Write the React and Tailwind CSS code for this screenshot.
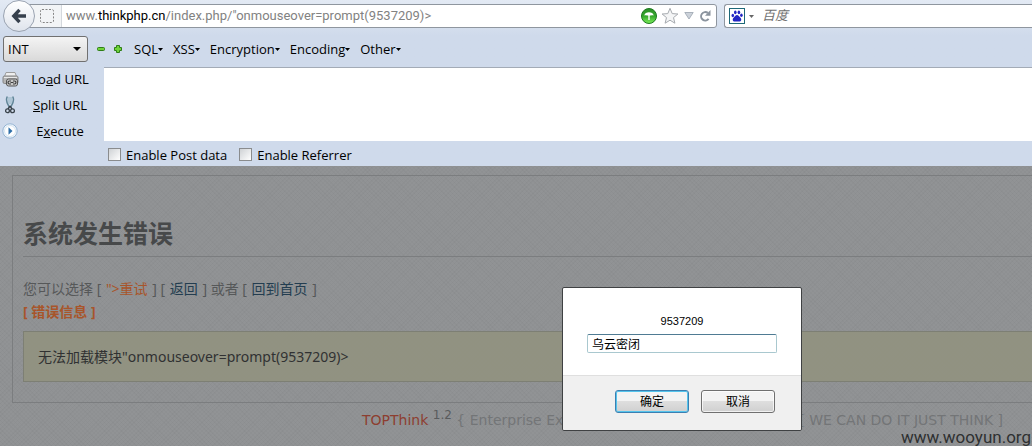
const ui = "font-['Open_Sans','Noto_Sans_CJK_SC',sans-serif]";

function BackIcon() {
  return (
    <svg width="16" height="16" viewBox="0 0 16 16" fill="none" stroke="#36404d" strokeWidth="3.4" aria-hidden="true">
      <path d="M8.5 1.8 2.8 8l5.7 6.2M3.2 8H15" />
    </svg>
  );
}

function ShieldIcon() {
  return (
    <svg width="18" height="18" viewBox="0 0 18 18" aria-hidden="true">
      <defs>
        <linearGradient id="globe" x1="0" y1="0" x2="0" y2="1">
          <stop offset="0" stopColor="#2b8f27" />
          <stop offset=".5" stopColor="#35a72d" />
          <stop offset="1" stopColor="#7df05a" />
        </linearGradient>
      </defs>
      <circle cx="9" cy="9" r="7.5" fill="url(#globe)" stroke="#1c7a20" />
      <path d="M4.300 8.500C5 4.200 13 4.200 13.700 8.500c-1.600-.7-3 0-4.700 0s-3.100-.7-4.700 0Z" fill="#fff" />
      <path d="M9 8v5" stroke="#fff" strokeWidth="1.4" />
    </svg>
  );
}

function StarIcon() {
  return (
    <svg width="18" height="18" viewBox="0 0 18 18" aria-hidden="true">
      <path d="m9 1.3 2.2 5.3 5.7.4-4.4 3.6 1.4 5.6L9 13.200l-4.900 3 1.400-5.600L1.100 7l5.700-.4Z" fill="#f4f5f6" stroke="#a7abb0" strokeLinejoin="round" />
    </svg>
  );
}

function ReloadIcon() {
  return (
    <svg width="12" height="12" viewBox="0 0 12 12" aria-hidden="true">
      <path d="M8.800 2.900A4.200 4.200 0 1 0 9.600 8.900" fill="none" stroke="#8b949e" strokeWidth="2" />
      <path d="M11.500 0v5.800H6Z" fill="#8b949e" />
    </svg>
  );
}

function PawIcon() {
  return (
    <svg width="16" height="16" viewBox="0 0 16 16" aria-hidden="true">
      <rect x=".5" y=".5" width="15" height="15" fill="#fff" stroke="#1d6878" />
      <g fill="#2326c4">
        <ellipse cx="3.800" cy="7.500" rx="1.300" ry="1.800" />
        <ellipse cx="6.300" cy="4.300" rx="1.300" ry="1.900" />
        <ellipse cx="9.900" cy="4.300" rx="1.300" ry="1.900" />
        <ellipse cx="12.400" cy="7.300" rx="1.300" ry="1.800" />
        <path d="M8 7c1.500 0 2.200 1.600 3.400 2.700 1.600 1.500.9 3.900-1.100 3.900H5.700c-2 0-2.700-2.400-1.100-3.900C5.800 8.600 6.500 7 8 7Z" />
      </g>
    </svg>
  );
}

function Caret({ className }) {
  return (
    <svg width="5" height="3" viewBox="0 0 5 3" className={className} aria-hidden="true">
      <path d="M0 0h5L2.500 3Z" fill="currentColor" />
    </svg>
  );
}

function LoadIcon() {
  return (
    <svg width="17" height="16" viewBox="0 0 17 16" fill="none" aria-hidden="true">
      <path d="M4 1.500h9l1.500 4h-12Z" fill="#eeeeee" stroke="#9c9c9c" />
      <rect x="1" y="5" width="15" height="7.500" rx="1.500" fill="#b5b5b5" stroke="#858585" />
      <path d="M2 6.500h13" stroke="#e8e8e8" />
      <rect x="4.500" y="8" width="11" height="7" rx="2" fill="#c9c9c9" stroke="#555" />
      <path d="M9 10H7.500a1.500 1.500 0 0 0 0 3H9M11 10h1.500a1.500 1.500 0 0 1 0 3H11M8.500 11.500h3" stroke="#3c3c3c" strokeWidth="1.200" />
    </svg>
  );
}

function SplitIcon() {
  return (
    <svg width="10" height="18" viewBox="0 0 10 18" fill="none" aria-hidden="true">
      <path d="M2.300.5C1 3 1.500 7 4.300 11M7.700.5C9 3 8.500 7 5.700 11" stroke="#5f8496" strokeWidth="1.500" />
      <path d="M4 1v7M6 1v7" stroke="#8fb3c1" />
      <path d="m5 10-2 3m2-3 2 3" stroke="#39424a" strokeWidth="1.400" />
      <circle cx="2.500" cy="14.800" r="1.900" stroke="#39424a" strokeWidth="1.300" />
      <circle cx="7.500" cy="14.800" r="1.900" stroke="#39424a" strokeWidth="1.300" />
    </svg>
  );
}

function ExecuteIcon() {
  return (
    <svg width="16" height="16" viewBox="0 0 16 16" aria-hidden="true">
      <circle cx="8" cy="8" r="7.200" fill="#f4f9fd" stroke="#93b3d3" />
      <circle cx="8" cy="8" r="5.500" fill="#fff" stroke="#d5e4f1" />
      <path d="m6.500 4.300 4 3.700-4 3.700Z" fill="#2e6fa8" />
    </svg>
  );
}

function AddressRow() {
  return (
    <div className="flex h-[35px] items-start">
      <button aria-label="Back" className="z-10 ml-[3px] flex size-8 shrink-0 items-center justify-center rounded-full border border-[#9aa3b1] bg-linear-to-b from-white to-[#dfe4ec]">
        <BackIcon />
      </button>
      <div className="mt-1 -ml-2 flex h-6 min-w-0 flex-1 items-center rounded-r-[3px] border border-[#8f969f] bg-white">
        <span className="flex h-full w-[34px] shrink-0 items-center justify-end border-r border-[#d4d8dd] bg-[#f2f4f6] pr-[7px]">
          <svg width="14" height="14" viewBox="0 0 14 14" className="shrink-0" aria-hidden="true">
            <rect x=".5" y=".5" width="13" height="13" rx="1.500" fill="none" stroke="#858585" strokeDasharray="2 1.500" />
          </svg>
        </span>
        <p className="min-w-0 flex-1 truncate pl-1 font-['Roboto',sans-serif] text-[13px] leading-5 text-[#828282]">
          www.<span className="text-black">thinkphp.cn</span>/index.php/"onmouseover=prompt(9537209)&gt;
        </p>
        <div className="flex items-center gap-[3px] pr-[5px]">
          <ShieldIcon />
          <button aria-label="Bookmark"><StarIcon /></button>
          <button aria-label="History" className="flex w-[14px] justify-center">
            <svg width="10" height="8" viewBox="0 0 10 8" aria-hidden="true"><path d="M.8.5h8.400L5 7Z" fill="#ccd2da" stroke="#a9b1bb" /></svg>
          </button>
          <button aria-label="Reload"><ReloadIcon /></button>
        </div>
      </div>
      <div className="mt-1 ml-[7px] flex h-6 w-[308px] shrink-0 items-center rounded-l-[3px] border border-r-0 border-[#8f969f] bg-white pl-1">
        <PawIcon />
        <Caret className="mx-1 text-[#666]" />
        <input aria-label="Search" placeholder="百度" className="ml-1 min-w-0 flex-1 text-[13px] italic outline-none placeholder:text-[#707070]" />
      </div>
    </div>
  );
}

function HackBar() {
  const menus = ["SQL", "XSS", "Encryption", "Encoding", "Other"];
  const link = "flex h-[26px] items-center";
  return (
    <div className="text-[13px] leading-5 text-black">
      <div className="flex h-8 items-start pl-[3px]">
        <div className="relative mt-px">
          <select aria-label="Type" className="h-[26px] w-[85px] appearance-none rounded-[3px] border border-[#707070] bg-linear-to-b from-[#f4f4f4] to-[#d9d9d9] pl-1 outline-none">
            <option>INT</option>
          </select>
          <svg width="8" height="4" viewBox="0 0 8 4" className="pointer-events-none absolute top-[11px] right-[7px]" aria-hidden="true"><path d="M0 0h8L4 4Z" /></svg>
        </div>
        <div className="flex h-7 items-center">
          <button aria-label="Decrease" className="ml-[9px]">
            <svg width="8" height="4" viewBox="0 0 8 4" className="block" aria-hidden="true"><rect x=".5" y=".5" width="7" height="3" rx="1" fill="#6fd43a" stroke="#2e7d17" /></svg>
          </button>
          <button aria-label="Increase" className="mr-3 ml-[9px]">
            <svg width="8" height="8" viewBox="0 0 8 8" className="block" aria-hidden="true"><path d="M2.500.5h3v2h2v3h-2v2h-3v-2h-2v-3h2Z" fill="#6fd43a" stroke="#2e7d17" /></svg>
          </button>
          <div className="flex gap-[10px]">
            {menus.map((m) => (
              <button key={m} className="flex items-center">
                {m}
                <Caret />
              </button>
            ))}
          </div>
        </div>
      </div>
      <div className="flex">
        <div className="-mt-px grid w-[104px] shrink-0 grid-cols-[20px_1fr] content-start items-center pr-1">
          <span className="flex justify-center"><LoadIcon /></span>
          <button className={`${link} justify-center`}><span>Lo<u>a</u>d URL</span></button>
          <span className="flex justify-center"><SplitIcon /></span>
          <button className={`${link} justify-center`}><span><u>S</u>plit URL</span></button>
          <span className="flex justify-center"><ExecuteIcon /></span>
          <button className={`${link} justify-center`}><span>E<u>x</u>ecute</span></button>
        </div>
        <div className="flex min-w-0 flex-1 flex-col">
          <textarea aria-label="URL" className="block h-[74px] w-full resize-none border-t border-[#a3abb6] bg-white outline-none" />
          <div className="flex h-[25px] items-center gap-3 pt-0.5 pl-1">
            {["Enable Post data", "Enable Referrer"].map((t) => (
              <label key={t} className="flex items-center gap-[5px]">
                <input type="checkbox" className="size-[13px] appearance-none border border-[#8a8c8e] bg-linear-to-br from-[#cfd2d5] to-white" />
                {t}
              </label>
            ))}
          </div>
        </div>
      </div>
    </div>
  );
}

function ErrorPage() {
  const link = "px-px";
  return (
    <main className="flex-1 bg-[#919395] bg-[repeating-linear-gradient(45deg,#00000005_0_1px,#0000_1px_3px),repeating-linear-gradient(-45deg,#00000005_0_1px,#0000_1px_3px)] pt-[9px] font-['Noto_Sans','Noto_Sans_CJK_SC',sans-serif] text-sm text-[#565859]">
      <section className="ml-3 border-y border-l border-[#7b7d7f] pb-5 pl-[10px]">
        <h1 className="border-b border-[#7b7d7f] pt-[38px] pb-1 text-[25px] leading-[38px] font-bold text-[#47494a]">系统发生错误</h1>
        <p className="mt-5 leading-6">
          您可以选择 [ <a href="#retry" className={`${link} text-[#a8552a]`}>"&gt;重试</a> ] [ <a href="#back" className={`${link} text-[#233d50]`}>返回</a> ] 或者 [ <a href="#home" className={`${link} text-[#233d50]`}>回到首页</a> ]
        </p>
        <p className="leading-[22px] font-bold text-[#a8552a]">[ 错误信息 ]</p>
        <div className="mt-2 border-y border-l border-[#7d7f74] bg-[#91927f]/90 px-[14px] py-3 leading-[25px] text-[#303132]">
          无法加载模块"onmouseover=prompt(9537209)&gt;
        </div>
      </section>
      <footer className="flex items-baseline justify-between pt-[7px] pr-[29px] pl-[362px] font-['DejaVu_Sans',sans-serif] text-sm leading-5 whitespace-nowrap text-[#737577]">
        <p>
          <a href="#topthink" className="text-[#8d3e30]">TOPThink</a>{" "}
          <sup className="text-xs leading-none text-[#595b5d]">1.2</sup> {"{ Enterprise Ex"}
        </p>
        <p>[ WE CAN DO IT JUST THINK ]</p>
      </footer>
    </main>
  );
}

function PromptDialog() {
  const button = "h-[23px] w-[74px] rounded-[3px] border bg-linear-to-b from-[#f3f3f3] from-50% via-[#dedede] via-50% to-[#d0d0d0]";
  return (
    <form role="dialog" aria-label="9537209" className="absolute top-[287px] left-[562px] w-60 rounded-[2px] border border-[#3f4143] bg-white font-['Liberation_Sans','Noto_Sans_CJK_SC',sans-serif] text-xs text-black">
      <div className="flex h-[87px] flex-col items-center px-6 pt-6">
        <label htmlFor="answer" className="text-[11px] leading-[18px]">9537209</label>
        <input id="answer" defaultValue="乌云密闭" className="mt-1 h-[19px] w-full rounded-[2px] border border-[#a9c8cf] border-t-[#4f7b93] px-1 outline-none" />
      </div>
      <div className="flex justify-end gap-3 rounded-b-[2px] border-t border-[#dfdfdf] bg-[#f0f0f0] px-[26px] pt-[14px] pb-[17px]">
        <button type="button" className={`${button} border-[#3c7fb1] inset-ring inset-ring-[#55c4ec]`}>确定</button>
        <button type="button" className={`${button} border-[#707070] inset-ring inset-ring-white/70`}>取消</button>
      </div>
    </form>
  );
}

export default function App() {
  return (
    <div className={`${ui} relative flex min-h-screen flex-col overflow-hidden`}>
      <header className="bg-[#cfdaeb] bg-linear-to-b from-[#e3eaf4] to-[#cfdaeb] to-[36px]">
        <AddressRow />
        <HackBar />
      </header>
      <ErrorPage />
      <PromptDialog />
      <p className="absolute right-px bottom-0 font-['Roboto',sans-serif] text-[17px] leading-[18px] text-[#2e3031]">www.wooyun.org</p>
    </div>
  );
}
